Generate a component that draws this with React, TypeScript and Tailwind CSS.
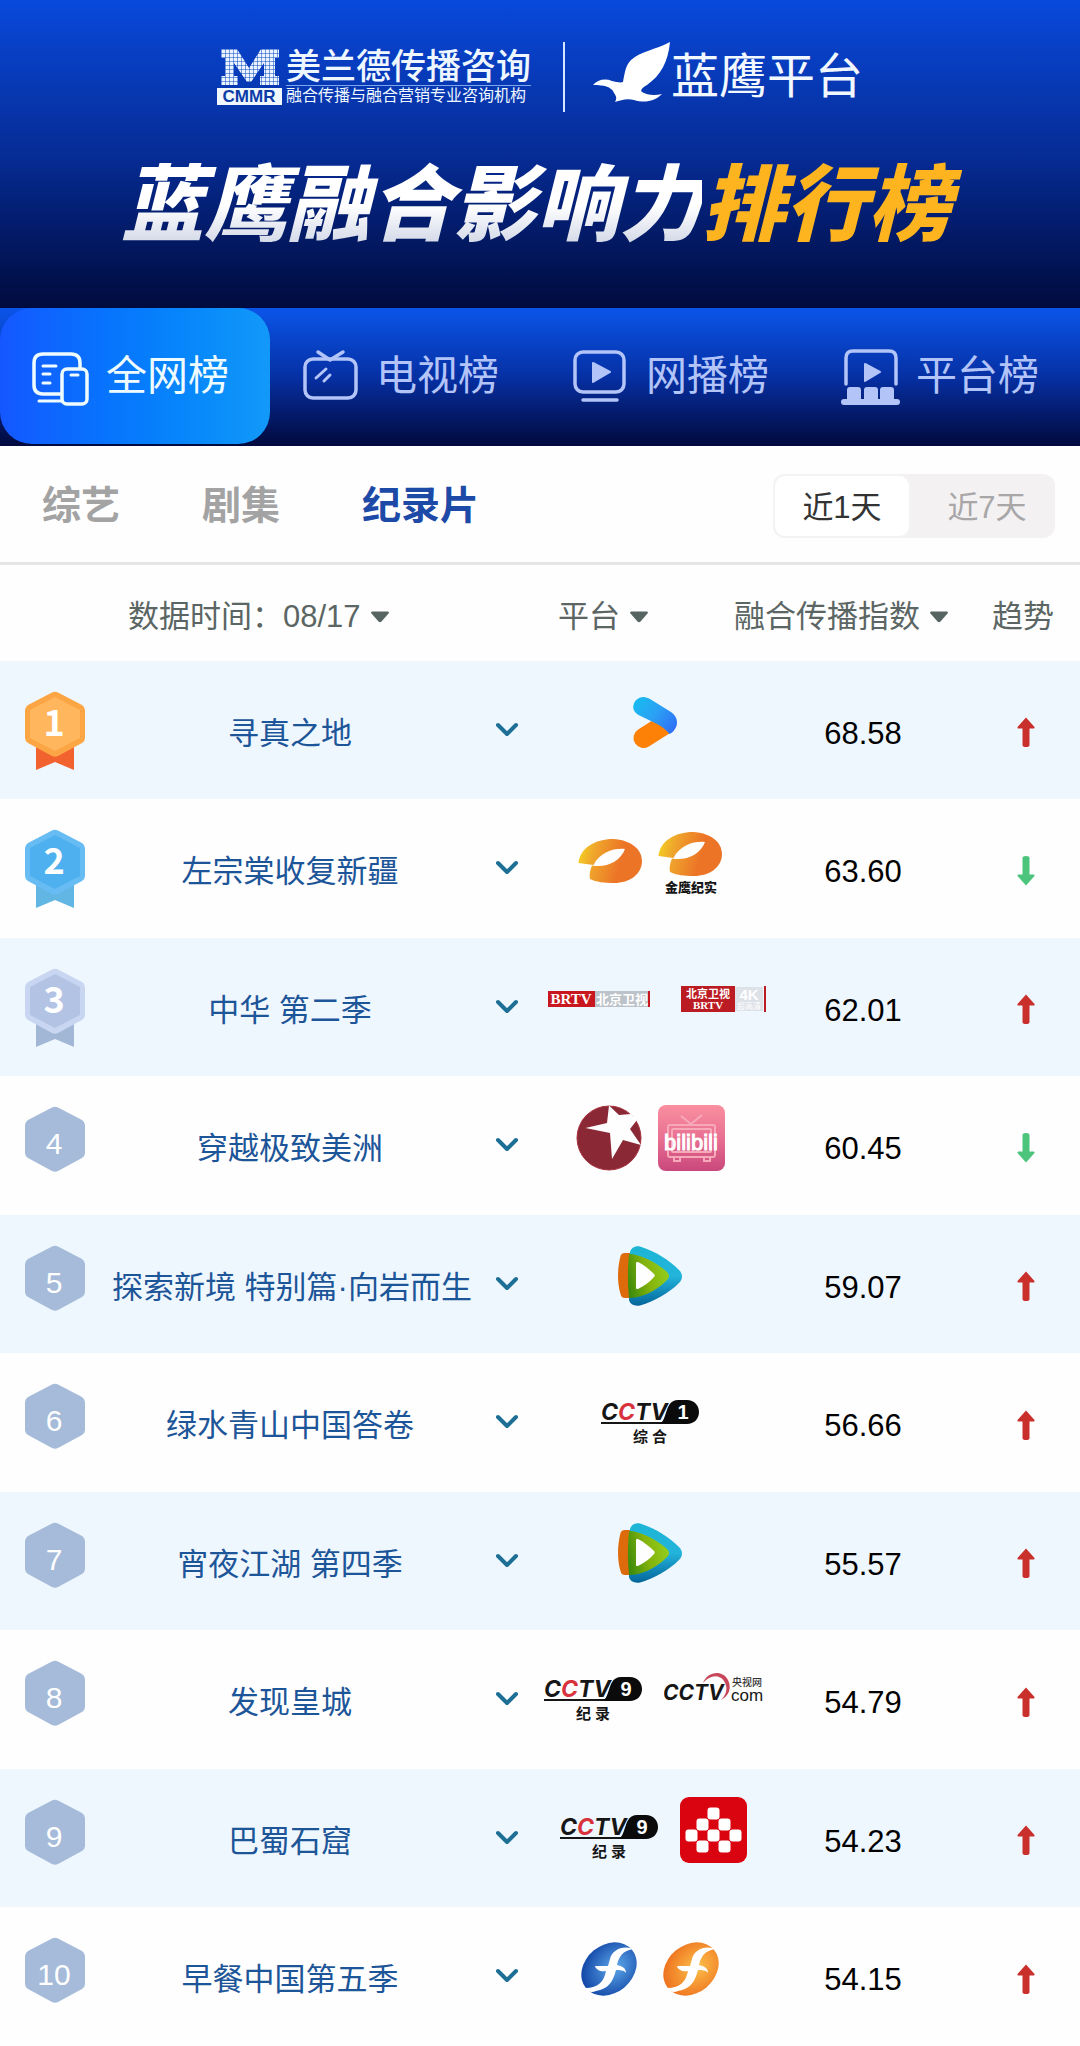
import { Fragment, useId, useState, type ReactNode } from "react";

interface Show {
  rank: number;
  title: string;
  platforms: ReactNode[];
  score: string;
  trend: "up" | "down";
}

const LOGO_FONT = '"Liberation Sans", "Noto Sans CJK SC", sans-serif';
const HEAVY_FONT = 'Inter, "Liberation Sans", sans-serif';
const SERIF_FONT = '"Liberation Serif", serif';

/* ---------- platform logos, all drawn on a 66px high canvas ---------- */

function Youku() {
  const id = useId();
  return (
    <svg width="56" height="66" viewBox="0 0 56 66" role="img" aria-label="优酷">
      <defs>
        <linearGradient id={id} x1="12" y1="10" x2="54" y2="42" gradientUnits="userSpaceOnUse">
          <stop offset="0" stopColor="#16bdf0" />
          <stop offset="0.5" stopColor="#2ba0f4" />
          <stop offset="1" stopColor="#2f6bf6" />
        </linearGradient>
      </defs>
      <path d="M21.5 49 L42 36" stroke="#fd8106" strokeWidth="20" strokeLinecap="round" />
      <path
        d="M21.5 8 C24 8 26 9 28 10 L49 23 C55 27 56.500 34 53.500 39 C52 42 50 44 47.500 45 C44 41 40 37 33 34 L16.500 26 C12 23 10.500 20 11.500 16 C12.500 11 17 8 21.500 8Z"
        fill={`url(#${id})`}
      />
    </svg>
  );
}

function Mango({ caption }: { caption?: string }) {
  const id = useId();
  return (
    <svg width="64" height="66" viewBox={caption ? "0 7 64 66" : "0 0 64 66"} role="img" aria-label={caption ?? "湖南卫视"}>
      <defs>
        <linearGradient id={id} x1="0" y1="26" x2="42" y2="36" gradientUnits="userSpaceOnUse">
          <stop offset="0" stopColor="#f3cf22" />
          <stop offset="0.35" stopColor="#efa62c" />
          <stop offset="1" stopColor="#ec7427" />
        </linearGradient>
      </defs>
      <path
        fill={`url(#${id})`}
        d="M0.500 35 C2 20 17 11 35 11 C53 12 64 21 64 33 C64 46 52 55 36 55 C26 55 18 54 12 51 C11 46 12.500 41 14 37.500 C28 40 42 34 47 21 C36 20 22 24 15.500 37 Z"
      />
      {caption && (
        <text x="33" y="71" fontSize="13" fontWeight="900" textAnchor="middle" fill="#161616" fontFamily={LOGO_FONT}>
          {caption}
        </text>
      )}
    </svg>
  );
}

function Brtv() {
  return (
    <svg width="117" height="66" viewBox="-14 0 117 66" role="img" aria-label="BRTV 北京卫视">
      <rect x="0" y="25" width="47" height="16" fill="#c8171e" />
      <rect x="47" y="25" width="53" height="16" fill="#bcc2c9" />
      <rect x="100" y="25" width="2" height="16" fill="#c8171e" />
      <text x="23" y="38" fontSize="15" fontWeight="700" textAnchor="middle" fill="#fff" fontFamily={SERIF_FONT}>
        BRTV
      </text>
      <text x="74" y="38" fontSize="13" fontWeight="700" textAnchor="middle" fill="#fff" fontFamily={LOGO_FONT}>
        北京卫视
      </text>
    </svg>
  );
}

function Brtv4k() {
  return (
    <svg width="99" height="66" viewBox="-14 0 99 66" role="img" aria-label="北京卫视 4K">
      <rect x="0" y="20" width="54" height="26" fill="#bb1b22" />
      <rect x="54" y="21" width="28" height="24" fill="#dde1e8" />
      <rect x="83" y="20" width="2" height="26" fill="#bb1b22" />
      <text x="27" y="32" fontSize="11" fontWeight="700" textAnchor="middle" fill="#fff" fontFamily={LOGO_FONT}>
        北京卫视
      </text>
      <text x="27" y="43" fontSize="11" fontWeight="700" textAnchor="middle" fill="#fff" fontFamily={SERIF_FONT}>
        BRTV
      </text>
      <text x="68" y="34" fontSize="15" fontWeight="700" textAnchor="middle" fill="#fff" fontFamily={LOGO_FONT}>
        4K
      </text>
      <text x="68" y="43" fontSize="8" textAnchor="middle" fill="#fff" fontFamily={LOGO_FONT}>
        超高清
      </text>
    </svg>
  );
}

function DragonTv() {
  return (
    <svg width="66" height="66" viewBox="0 0 66 66" role="img" aria-label="东方卫视">
      <circle cx="33" cy="33" r="32" fill="#8b2836" stroke="#a8323f" />
      <path
        d="M33 0.500 L43 10 L55 9 L61 15 L54 24 L65 40 L47 35 L36 54 L34 28 L9.500 23 L31 18 Z"
        fill="#fefefe"
      />
    </svg>
  );
}

function Bilibili() {
  const id = useId();
  return (
    <svg width="67" height="66" viewBox="0 0 67 66" role="img" aria-label="bilibili">
      <defs>
        <linearGradient id={id} x1="0" y1="0" x2="0" y2="1">
          <stop offset="0" stopColor="#f98f9f" />
          <stop offset="0.5" stopColor="#e97092" />
          <stop offset="1" stopColor="#c9487c" />
        </linearGradient>
      </defs>
      <rect width="67" height="66" rx="8" fill={`url(#${id})`} />
      <g fill="none" stroke="#f7a9ba" strokeWidth="2">
        <rect x="10" y="20" width="47" height="32" rx="2" />
        <rect x="14" y="24" width="39" height="23" rx="1" />
        <path d="M23 11 L33 19 L44 10" />
        <path d="M16 53 v3 h6 v-3 M46 53 v3 h6 v-3" />
      </g>
      <text
        x="33"
        y="45"
        fontSize="22"
        textAnchor="middle"
        fill="#fff"
        stroke="#fff"
        strokeWidth="1"
        fontFamily={LOGO_FONT}
      >
        bilibili
      </text>
    </svg>
  );
}

function TencentVideo() {
  const id = useId();
  return (
    <svg width="64" height="66" viewBox="0 0 64 66" role="img" aria-label="腾讯视频">
      <defs>
        <linearGradient id={`${id}b`} x1="0" y1="0" x2="0" y2="1">
          <stop offset="0" stopColor="#1cb5d4" />
          <stop offset="0.5" stopColor="#23b4dc" />
          <stop offset="1" stopColor="#04659a" />
        </linearGradient>
        <linearGradient id={`${id}g`} x1="10" y1="40" x2="50" y2="30" gradientUnits="userSpaceOnUse">
          <stop offset="0" stopColor="#3f8c0c" />
          <stop offset="0.500" stopColor="#84b30c" />
          <stop offset="1" stopColor="#93cd1c" />
        </linearGradient>
      </defs>
      <path
        d="M12 9 C13 5 17 2.500 22 3.500 C37 8 51 17 61 27 C65 31 65 36 61 40 C51 50 37 58 22 62.500 C16 63.500 12 61 11 57 Z"
        fill={`url(#${id}b)`}
      />
      <path d="M12 10 H7 C4.500 10 3 11 2.500 13 C-0.800 26 -0.800 40 2.500 51 C3 54 5 55 7 55 H12 Z" fill="#dd6a0b" />
      <path
        d="M11 11 C20 11 37 18 48 28 C52 31 52 35 48 38 C37 49 22 55 11 55 C9.500 40 9.500 25 11 11Z"
        fill={`url(#${id}g)`}
      />
      <path d="M18 20 C18 19 19 19 20 19 C26 22 32 27 36 31 C37 32 37 33 36 34 C32 39 26 43 20 46 C19 46 18 46 18 45 Z" fill="#fefefe" />
    </svg>
  );
}

function Cctv({ channel, label }: { channel: string; label: string }) {
  return (
    <svg width="110" height="66" viewBox="-6 0 110 66" role="img" aria-label={`CCTV-${channel} ${label}`}>
      <text x="0" y="38" fontSize="23" fontWeight="700" fontStyle="italic" fill="#161616" fontFamily={HEAVY_FONT}>
        C<tspan fill="#d8323c">C</tspan>TV
      </text>
      <path d="M0 41 H62" stroke="#161616" strokeWidth="2" />
      <path d="M58 42 C67 39 63 18 77 18 H86 C93 18 98 23 98 30 C98 37 93 42 86 42 Z" fill="#0b0b0b" />
      <text x="82" y="37" fontSize="20" fontWeight="700" textAnchor="middle" fill="#fff" fontFamily={LOGO_FONT}>
        {channel}
      </text>
      <text x="49" y="60" fontSize="15" fontWeight="700" textAnchor="middle" fill="#161616" fontFamily={LOGO_FONT}>
        {label}
      </text>
    </svg>
  );
}

function CctvCom() {
  return (
    <svg width="99" height="66" viewBox="0 0 99 66" role="img" aria-label="央视网">
      <path
        d="M39 24 C43 13 58 10 64 21 C68 29 65 37 57 41 C63 35 64 28 60 22 C55 15 46 16 39 24Z"
        fill="#c8475a"
      />
      <text x="-1" y="41" fontSize="21" fontWeight="700" fontStyle="italic" fill="#161616" fontFamily={HEAVY_FONT}>
        CCTV
      </text>
      <text x="83" y="27" fontSize="10" fontWeight="500" textAnchor="middle" fill="#333" fontFamily={LOGO_FONT}>
        央视网
      </text>
      <text x="83" y="42" fontSize="17" textAnchor="middle" fill="#161616" fontFamily={LOGO_FONT}>
        com
      </text>
    </svg>
  );
}

const RED_TILES = [
  [33, 16],
  [22, 27],
  [44, 27],
  [11, 38],
  [33, 38],
  [55, 38],
  [22, 49],
  [44, 49],
];

function RedTiles() {
  return (
    <svg width="67" height="66" viewBox="0 0 67 66" role="img" aria-label="央视频">
      <rect width="67" height="66" rx="9" fill="#d9040f" />
      {RED_TILES.map(([x, y]) => (
        <rect key={`${x}-${y}`} x={x - 5.5} y={y - 5.5} width="12" height="12" rx="3" fill="#fff" />
      ))}
    </svg>
  );
}

function FujianTv({ from, to, label }: { from: string; to: string; label: string }) {
  const id = useId();
  return (
    <svg width="66" height="66" viewBox="0 0 66 66" role="img" aria-label={label}>
      <defs>
        <radialGradient id={id} cx="0.6" cy="0.55" r="0.6">
          <stop offset="0" stopColor={from} />
          <stop offset="1" stopColor={to} />
        </radialGradient>
      </defs>
      <ellipse cx="33" cy="33" rx="30" ry="24" fill={`url(#${id})`} transform="rotate(-40 33 33)" />
      <path
        d="M57 13 C47 9 36 14 34 23 L32 30 C27 30 23 30 19 30 C20 34 25 36 30 35 C28 45 23 52 9 52 C11 56 16 57 20 55 C32 53 37 46 40 34 C44 34 48 34 50 37 C50 32 46 30 41 29 C43 21 46 15 57 13Z"
        fill="#fff"
      />
    </svg>
  );
}

/* ---------- rank badges ---------- */

const MEDALS: Record<number, { rim: string; face: string; ribbon: string }> = {
  1: { rim: "#fba544", face: "#ffb65c", ribbon: "#f2622f" },
  2: { rim: "#67bdf3", face: "#4fb0f0", ribbon: "#61b6e4" },
  3: { rim: "#c9d6f2", face: "#b3c3e4", ribbon: "#a2b7d6" },
};

function RankBadge({ rank }: { rank: number }) {
  const medal = MEDALS[rank];
  return (
    <svg width="60" height="80" viewBox="0 0 60 80" className="block" role="img" aria-label={`第${rank}名`}>
      {medal && <path d="M11 52 H49 V79 L30 71 L11 79 Z" fill={medal.ribbon} />}
      <path
        d="M27 1.500 Q30 0 33 1.500 L57 14 Q60 16 60 19 V47 Q60 50 57 52 L33 65 Q30 66.500 27 65 L3 52 Q0 50 0 47 V19 Q0 16 3 14 Z"
        fill={medal ? medal.rim : "#a5bbd9"}
      />
      {medal && <path d="M30 6 L55 19 V47 L30 60 L5 47 V19 Z" fill={medal.face} />}
      <text
        x="29"
        y={medal ? 45 : 48}
        fontSize={medal ? 36 : 30}
        fontWeight={medal ? 700 : 400}
        textAnchor="middle"
        fill="#fff"
        fontFamily={medal ? '"Noto Sans CJK SC", sans-serif' : LOGO_FONT}
      >
        {rank}
      </text>
    </svg>
  );
}

function TrendArrow({ trend }: { trend: "up" | "down" }) {
  return (
    <svg
      width="18"
      height="30"
      viewBox="0 0 18 30"
      className={trend === "up" ? "text-[#c9302c]" : "rotate-180 text-[#4cc47c]"}
      role="img"
      aria-label={trend === "up" ? "上升" : "下降"}
    >
      <path
        d="M9 0.500 L17.500 10 Q18 11.500 16.500 11.500 H12.500 V28 Q12.500 30 9 30 Q5.500 30 5.500 28 V11.500 H1.500 Q0 11.500 0.500 10 Z"
        fill="currentColor"
      />
    </svg>
  );
}

function Caret() {
  return (
    <svg width="18" height="12" viewBox="0 0 18 12" aria-hidden="true">
      <path d="M1 0.500 H17 Q18.500 1 17.500 2.500 L10.500 10.500 Q9 12 7.500 10.500 L0.500 2.500 Q-0.500 1 1 0.500Z" fill="#566562" />
    </svg>
  );
}

/* ---------- data ---------- */

const SHOWS: Show[] = [
  { rank: 1, title: "寻真之地", platforms: [<Youku />], score: "68.58", trend: "up" },
  { rank: 2, title: "左宗棠收复新疆", platforms: [<Mango />, <Mango caption="金鹰纪实" />], score: "63.60", trend: "down" },
  { rank: 3, title: "中华 第二季", platforms: [<Brtv />, <Brtv4k />], score: "62.01", trend: "up" },
  { rank: 4, title: "穿越极致美洲", platforms: [<DragonTv />, <Bilibili />], score: "60.45", trend: "down" },
  { rank: 5, title: "探索新境 特别篇·向岩而生", platforms: [<TencentVideo />], score: "59.07", trend: "up" },
  { rank: 6, title: "绿水青山中国答卷", platforms: [<Cctv channel="1" label="综 合" />], score: "56.66", trend: "up" },
  { rank: 7, title: "宵夜江湖 第四季", platforms: [<TencentVideo />], score: "55.57", trend: "up" },
  { rank: 8, title: "发现皇城", platforms: [<Cctv channel="9" label="纪 录" />, <CctvCom />], score: "54.79", trend: "up" },
  { rank: 9, title: "巴蜀石窟", platforms: [<Cctv channel="9" label="纪 录" />, <RedTiles />], score: "54.23", trend: "up" },
  {
    rank: 10,
    title: "早餐中国第五季",
    platforms: [
      <FujianTv from="#5fa9ea" to="#1348a8" label="东南卫视" />,
      <FujianTv from="#fdc04a" to="#ee7420" label="海峡卫视" />,
    ],
    score: "54.15",
    trend: "up",
  },
];

const BOARDS = [
  {
    label: "全网榜",
    icon: (
      <>
        <path d="M30 48 H13 Q4 48 4 39 V17 Q4 8 13 8 H41 Q50 8 50 17 V22" />
        <path d="M13 20 H26 M13 28 H20 M13 37 H20 M9 55 H31" strokeWidth="3" />
        <rect x="32" y="23" width="25" height="35" rx="5" />
        <path d="M41 29 H48" strokeWidth="3" />
      </>
    ),
  },
  {
    label: "电视榜",
    icon: (
      <>
        <rect x="5" y="13" width="51" height="39" rx="8" />
        <path d="M18 6 L30 14 L43 6" />
        <path d="M26 23 L16 32 M30 29 L24 35" strokeWidth="3" />
      </>
    ),
  },
  {
    label: "网播榜",
    icon: (
      <>
        <rect x="5" y="6" width="49" height="40" rx="8" />
        <path d="M13 54 H47" />
        <path d="M23 17 L40 26 L23 36 Z" fill="currentColor" strokeWidth="2" />
      </>
    ),
  },
  {
    label: "平台榜",
    icon: (
      <>
        <path d="M6 38 V12 Q6 5 13 5 H49 Q56 5 56 12 V38" />
        <path d="M25 18 L40 26 L25 35 Z" fill="currentColor" strokeWidth="2" />
        <path
          d="M7 53 V44 Q7 41 10 41 H18 Q21 41 21 44 V53 H24 V44 Q24 41 27 41 H35 Q38 41 38 44 V53 H40 V44 Q40 41 43 41 H51 Q54 41 54 44 V53 H57 Q60 53 60 56 Q60 59 57 59 H4 Q1 59 1 56 Q1 53 4 53Z"
          fill="currentColor"
          stroke="none"
        />
      </>
    ),
  },
];

const CATEGORIES = ["综艺", "剧集", "纪录片"];
const RANGES = ["近1天", "近7天"];

/* ---------- page ---------- */

function BrandBar() {
  return (
    <div className="flex items-center justify-center">
      <svg width="65" height="56" viewBox="0 0 65 56" role="img" aria-label="CMMR">
        <defs>
          <pattern id="dots" width="4" height="4" patternUnits="userSpaceOnUse">
            <rect width="4" height="4" fill="#e9f4ff" />
            <path d="M0 0 H4 M0 0 V4" stroke="#0a43c4" strokeWidth="1" />
          </pattern>
        </defs>
        <path d="M4 0 H20 L32 19 L44 0 H62 V9 H58 V27 H62 V36 H43 V27 H47 V14 L34 33 H30 L17 14 V27 H21 V36 H4 V27 H8 V9 H4 Z" fill="url(#dots)" />
        <rect x="0" y="39" width="65" height="17" fill="#f0f8ff" />
        <text x="32" y="53" fontSize="17" fontWeight="700" textAnchor="middle" fill="#0c3ba8" fontFamily={LOGO_FONT}>
          CMMR
        </text>
      </svg>
      <div className="ml-1 flex flex-col text-[#eef7ff]">
        <span className="border-b border-[#7ea6ee] text-[35px] leading-9 font-medium">美兰德传播咨询</span>
        <span className="text-base leading-5">融合传播与融合营销专业咨询机构</span>
      </div>
      <span className="mr-7 ml-8 h-[70px] w-0.5 bg-[#d5e4ff]" />
      <svg width="78" height="70" viewBox="0 0 78 70" aria-hidden="true">
        <path
          d="M77 0 C75 20 68 33 54 43 C49 46 47 48 49 50 C54 53 61 54 69 52 C61 60 51 61 41 58 C34 56 28 58 22 60 C25 55 22 53 20 49 C17 45 12 43 0 43 C4 38 12 36 19 39 C23 40 28 41 30 40 C32 29 33 23 38 18 C48 9 62 8 77 0Z"
          fill="#fff"
        />
      </svg>
      <span className="text-5xl leading-[60px] text-[#f2f8ff]">蓝鹰平台</span>
    </div>
  );
}

export default function App() {
  const [board, setBoard] = useState("全网榜");
  const [category, setCategory] = useState("纪录片");
  const [range, setRange] = useState("近1天");

  return (
    <main className="w-full bg-[#fefefe] font-['Liberation_Sans','Noto_Sans_CJK_SC',sans-serif]">
      <header className="bg-linear-to-b from-[#0849dc] via-[#062c96] to-[#010b3e] pt-[42px] pb-[50px]">
        <BrandBar />
        <h1 className="mt-[42px] pr-2 text-center text-[83px] leading-[104px] font-black whitespace-nowrap italic">
          <span className="bg-linear-to-b from-white from-50% to-[#c9d0e2] bg-clip-text text-transparent">蓝鹰融合影响力</span>
          <span className="text-[#fdb41e]">排行榜</span>
        </h1>
      </header>

      <nav className="grid grid-cols-4 bg-linear-to-b from-[#0b55ea] via-[#0630a4] to-[#020a3e] pb-0.5">
        {BOARDS.map((b) => (
          <button
            key={b.label}
            type="button"
            onClick={() => setBoard(b.label)}
            className={
              b.label === board
                ? "flex h-[136px] items-center gap-4 rounded-[32px] bg-linear-to-r from-[#1557ff] to-[#1299f8] pl-[30px] text-[#effcff]"
                : "flex h-[136px] items-center gap-4 pl-[30px] text-[#b3c4f8]"
            }
          >
            <svg
              width="60"
              height="60"
              viewBox="0 0 60 60"
              fill="none"
              stroke="currentColor"
              strokeWidth="3.5"
              strokeLinecap="round"
              strokeLinejoin="round"
              aria-hidden="true"
            >
              {b.icon}
            </svg>
            <span className="text-[41px] leading-[60px] whitespace-nowrap">{b.label}</span>
          </button>
        ))}
      </nav>

      <div className="flex items-center justify-between border-b-[3px] border-[#e6e6e6] pt-7 pr-[25px] pb-6 pl-[42px]">
        <div className="flex gap-[82px]">
          {CATEGORIES.map((c) => (
            <button
              key={c}
              type="button"
              onClick={() => setCategory(c)}
              className={
                c === category
                  ? "text-[39px] leading-[56px] font-bold text-[#1c4aa6]"
                  : "text-[39px] leading-[56px] font-bold text-[#a3a3a3]"
              }
            >
              {c}
            </button>
          ))}
        </div>
        <div className="flex rounded-xl bg-[#f3f1f2]">
          {RANGES.map((r) => (
            <button
              key={r}
              type="button"
              onClick={() => setRange(r)}
              className={
                r === range
                  ? "h-16 w-[138px] rounded-xl border-2 border-[#f3f3f3] bg-white pt-1 text-[31px] text-[#333]"
                  : "h-16 w-36 pt-1 pl-2 text-[31px] text-[#a8a6a7]"
              }
            >
              {r}
            </button>
          ))}
        </div>
      </div>

      <table className="w-full table-fixed border-collapse text-[31px]">
        <colgroup>
          <col className="w-28" />
          <col />
          <col className="w-[46px]" />
          <col className="w-60" />
          <col className="w-[186px]" />
          <col className="w-[124px]" />
        </colgroup>
        <thead>
          <tr className="h-24 text-left whitespace-nowrap text-[#5b6664]">
            <th colSpan={3} className="pt-2 pl-32 font-normal">
              <span className="flex items-center">
                <label htmlFor="date">数据时间：</label>
                <select id="date" className="appearance-none bg-transparent pr-2.5">
                  <option>08/17</option>
                </select>
                <Caret />
              </span>
            </th>
            <th className="pt-2 pl-7 font-normal">
              <button type="button" className="flex items-center gap-2.5">
                平台
                <Caret />
              </button>
            </th>
            <th className="pt-2 font-normal">
              <button type="button" className="-ml-9 flex items-center gap-2.5">
                融合传播指数
                <Caret />
              </button>
            </th>
            <th className="pt-2 pl-9 font-normal">趋势</th>
          </tr>
        </thead>
        <tbody>
          {SHOWS.map((show) => (
            <tr key={show.rank} className="h-[139px] odd:h-[138px] odd:bg-[#eff7fe]">
              <td className="pt-[30px] pl-[25px] align-top">
                <RankBadge rank={show.rank} />
              </td>
              <td className="pt-2 pr-4 text-center whitespace-nowrap text-[#1d5599]">{show.title}</td>
              <td className="pb-1 text-center">
                <button type="button" aria-label={`展开${show.title}`} className="align-middle">
                  <svg width="24" height="16" viewBox="0 0 24 16" className="block" aria-hidden="true">
                    <path d="M3 3 L12 12 L21 3" fill="none" stroke="#1d6f96" strokeWidth="4" strokeLinecap="round" strokeLinejoin="round" />
                  </svg>
                </button>
              </td>
              <td className="pb-4">
                <div className="flex justify-center gap-4">
                  {show.platforms.map((logo, i) => (
                    <Fragment key={i}>{logo}</Fragment>
                  ))}
                </div>
              </td>
              <td className="pt-2 text-center text-black">{show.score}</td>
              <td className="pt-1 pl-4">
                <span className="flex justify-center">
                  <TrendArrow trend={show.trend} />
                </span>
              </td>
            </tr>
          ))}
        </tbody>
      </table>
    </main>
  );
}
